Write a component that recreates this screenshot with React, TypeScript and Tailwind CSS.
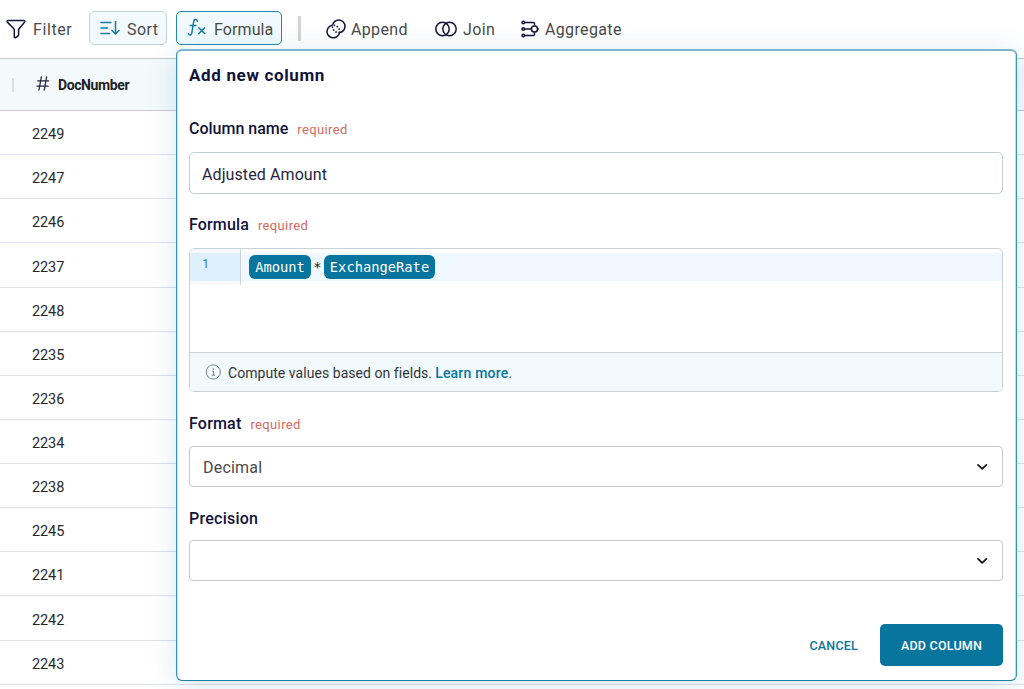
import React from "react";

const rows = ["2249", "2247", "2246", "2237", "2248", "2235", "2236", "2234", "2238", "2245", "2241", "2242", "2243"];

function FilterIcon() {
  return (
    <svg className="block shrink-0" width="20" height="20" viewBox="0 0 20 20" fill="none" stroke="#12123a" strokeWidth="1.5" strokeLinejoin="round">
      <path d="M2 1.500h16c.8 0 1.200 1 .7 1.600l-5.600 6.600c-.3.400-.5.800-.5 1.300v5c0 .4-.2.700-.5.900l-2.500 1.700c-.6.400-1.300 0-1.300-.7v-6.900c0-.500-.2-.900-.5-1.300L1.300 3.100C.8 2.500 1.200 1.500 2 1.500z" />
    </svg>
  );
}

function SortIcon() {
  return (
    <svg className="block shrink-0" width="20" height="16" viewBox="0 0 20 16" fill="none" stroke="#127ba3" strokeWidth="1.5" strokeLinecap="round" strokeLinejoin="round">
      <path d="M1 2.500h10M1 8h6.500M1 13.500h8.500M15.500 1.500v12.300M12 10.500l3.500 3.500 3.500-3.500" />
    </svg>
  );
}

function FormulaIcon() {
  return (
    <svg className="block shrink-0" width="20" height="20" viewBox="0 0 20 20" fill="none" stroke="#127ba3" strokeWidth="1.5" strokeLinecap="round" strokeLinejoin="round">
      <path d="M10.300 3.200c0-1.200-.9-1.800-1.900-1.600-1.100.2-1.700 1.300-1.900 3L4.900 14.500c-.3 1.700-.9 2.600-1.900 2.600-.9 0-1.500-.500-1.500-1.400M3.200 7.500h5.800" />
      <path d="M11.800 9.700l5.800 5.800M17.600 9.700l-5.800 5.800" />
    </svg>
  );
}

function HashIcon() {
  return (
    <svg className="block shrink-0" width="14" height="15" viewBox="0 0 14 15" fill="none" stroke="#25253f" strokeWidth="1.300" strokeLinecap="round">
      <path d="M5.300 1L3 14M10.600 1L8.300 14M1.700 4.800h11M1 10.200h11" />
    </svg>
  );
}

function AppendIcon() {
  return (
    <svg className="block shrink-0" width="20" height="20" viewBox="0 0 20 20" fill="none" stroke="#12123a" strokeWidth="1.500">
      <path d="M6.500 6.250A6.300 6.300 0 1 1 13.500 13.550" />
      <path d="M6.500 6.250A6.300 6.300 0 1 0 13.500 13.550" />
      <path d="M6.500 6.250A6.300 6.300 0 0 0 13.500 13.550M6.500 6.250A6.300 6.300 0 0 1 13.500 13.550" strokeDasharray="1.500 1.600" strokeDashoffset="-1.200" />
    </svg>
  );
}

function JoinIcon() {
  return (
    <svg className="block shrink-0" width="22" height="16" viewBox="0 0 22 16" fill="none" stroke="#12123a" strokeWidth="1.500">
      <circle cx="7.500" cy="8" r="6.700" />
      <circle cx="14.500" cy="8" r="6.700" />
    </svg>
  );
}

function AggregateIcon() {
  return (
    <svg className="block shrink-0" width="18" height="18" viewBox="0 0 18 18" fill="none" stroke="#12123a" strokeWidth="1.500">
      <circle cx="2.300" cy="2.500" r="1.300" />
      <circle cx="2.300" cy="9" r="1.300" />
      <circle cx="2.300" cy="15.500" r="1.300" />
      <circle cx="13.500" cy="9" r="3.100" />
      <path d="M3.700 2.500h8.500c.8 0 1.300.5 1.300 1.300v2M3.700 9h6.600M3.700 15.500h8.500c.8 0 1.300-.5 1.300-1.300v-2M16.600 9h1.200" />
    </svg>
  );
}

function Chevron() {
  return (
    <svg className="block shrink-0" width="12" height="8" viewBox="0 0 12 8" fill="none" stroke="#161616" strokeWidth="1.700" strokeLinecap="round" strokeLinejoin="round">
      <path d="M2 1.800l4.200 4 4.200-4" />
    </svg>
  );
}

function InfoIcon() {
  return (
    <svg className="block shrink-0" width="16" height="16" viewBox="0 0 16 16" fill="none" stroke="#72858e" strokeWidth="1">
      <circle cx="8.300" cy="8" r="7.100" />
      <path d="M7.200 7.200h1.300v3.800M6.800 11.200h3.200" />
      <circle cx="8.300" cy="5" r=".4" fill="#72858e" />
    </svg>
  );
}

function Label({ children, required }: { children: React.ReactNode; required?: boolean }) {
  return (
    <div className="flex h-5 items-baseline gap-[9px] leading-5">
      <span className="text-[16px] font-medium text-[#12123a]">{children}</span>
      {required && <span className="text-[13px] tracking-[0.35px] text-[#d4695f]">required</span>}
    </div>
  );
}

function Select({ value }: { value?: string }) {
  return (
    <div className="flex h-[41px] items-center justify-between rounded-[4px] border border-[#c9c9c9] bg-white pl-[13px] pr-[14px]">
      <span className="pt-[3px] text-[16px] tracking-[0.2px] text-[#4a4a4a]">{value}</span>
      <Chevron />
    </div>
  );
}

export default function App() {
  return (
    <div className="relative h-[689px] w-[1024px] overflow-hidden bg-white font-['Roboto',sans-serif]">
      <header className="flex h-[58px] items-start pl-[6px] pt-[11px] text-[16px] text-[#4a4a4a]">
        <div className="flex h-[35px] w-[83px] items-center gap-[7px]">
          <FilterIcon />
          <span className="pt-[2px] tracking-[0.6px]">Filter</span>
        </div>
        <div className="flex h-[34px] w-[78px] items-center gap-[7px] rounded-[5px] border border-[#c3d3d9] bg-[#f2fafd] pl-[10px]">
          <SortIcon />
          <span className="pt-[3px] tracking-[0.4px]">Sort</span>
        </div>
        <div className="ml-[9px] flex h-[34px] w-[106px] items-center gap-[7px] rounded-[5px] border border-[#2588ab] bg-[#f0fafe] pl-[10px]">
          <FormulaIcon />
          <span className="pt-[3px] tracking-[0.1px]">Formula</span>
        </div>
        <div className="ml-4 mt-[5px] h-[25px] w-[3px] bg-[#cfd4d8]" />
        <div className="ml-[25px] flex h-[35px] w-[109px] items-center gap-[5px]">
          <AppendIcon />
          <span className="pt-[2px] tracking-[0.35px]">Append</span>
        </div>
        <div className="flex h-[35px] w-[86px] items-center gap-[6px]">
          <JoinIcon />
          <span className="pt-[2px] tracking-[0.4px]">Join</span>
        </div>
        <div className="flex h-[35px] items-center gap-[6px]">
          <AggregateIcon />
          <span className="pt-[2px] tracking-[0.35px]">Aggregate</span>
        </div>
      </header>

      <div className="flex h-[53px] items-center border-y border-[#c5c9cb] bg-[#f4fafb] pl-[12px]">
        <div className="h-[14px] w-[2px] bg-[#d9dfe1]" />
        <div className="ml-[22px] pb-[3px]">
          <HashIcon />
        </div>
        <span className="ml-2 pt-[2px] text-[14px] font-bold tracking-[-0.4px] text-[#202124]">DocNumber</span>
      </div>
      <div>
        {rows.map((row) => (
          <div key={row} className="flex h-[44.130px] items-center border-b border-[#dfe2ec] pl-8 pt-[5px] text-[14.500px] tracking-[-0.1px] text-[#25282b]">
            {row}
          </div>
        ))}
      </div>

      <section className="absolute left-[176px] top-[49px] flex h-[632px] w-[841px] flex-col rounded-[6px] border-x border-b border-t-2 border-x-[#3a94b3] border-b-[#1880a5] border-t-[#7ab8cd] bg-white pl-[12px] pr-[13px] shadow-[inset_1px_0_0_#c3dfe9,inset_-1px_0_0_#c3dfe9,0_4px_28px_rgba(20,120,170,0.17)]">
        <h1 className="mt-[14px] h-5 text-[17px] font-bold leading-5 tracking-[0.650px] text-[#12123a]">Add new column</h1>

        <div className="mt-[34px]">
          <Label required>Column name</Label>
        </div>
        <div className="mt-[13px] flex h-[42px] items-center rounded-[5px] border border-[#c3cfd4] pl-3 pt-[4px] text-[16px] tracking-[0.1px] text-[#25253f]">
          Adjusted Amount
        </div>

        <div className="mt-[21px] tracking-[0.15px]">
          <Label required>Formula</Label>
        </div>
        <div className="mt-[13px] flex h-[144px] flex-col overflow-hidden rounded-[5px] border border-[#c8d1d5]">
          <div className="h-[103px]">
            <div className="flex h-[36px]">
              <div className="w-[51px] border-r border-[#ccd3d6] bg-[#f6f8f9] pt-1">
                <div className="h-7 bg-[#dff0fd] pl-3 pt-[2px] text-[13px] leading-[18px] text-[#3b83a2]">1</div>
              </div>
              <div className="flex-1 pt-1">
                <div className="flex h-7 items-center bg-[#eff8fe] pl-2 font-['DejaVu_Sans_Mono',monospace] text-[13.750px] text-[#222222]">
                  <span className="flex h-6 w-[62px] items-center justify-center rounded-[6px] bg-[#07759d] text-white">Amount</span>
                  <span className="w-[13px] text-center">*</span>
                  <span className="flex h-6 w-[111px] items-center justify-center rounded-[6px] bg-[#07759d] text-white">ExchangeRate</span>
                </div>
              </div>
            </div>
          </div>
          <div className="flex flex-1 items-center border-t border-[#c8d1d5] bg-[#f2fafd] pl-[15px] text-[14px] text-[#303438]">
            <InfoIcon />
            <span className="ml-[7px] pt-[2px] tracking-[0.050px]">Compute values based on fields.</span>
            <span className="ml-[3px] pt-[2px] font-medium tracking-[0.2px] text-[#07759d]">Learn more</span>
            <span className="pt-[2px]">.</span>
          </div>
        </div>

        <div className="mt-[22px] tracking-[0.2px]">
          <Label required>Format</Label>
        </div>
        <div className="mt-[12px]">
          <Select value="Decimal" />
        </div>

        <div className="mt-[22px] tracking-[0.25px]">
          <Label>Precision</Label>
        </div>
        <div className="mt-[11px]">
          <Select />
        </div>

        <div className="mt-[43px] flex items-center justify-end text-[12.500px] font-medium">
          <button className="mr-[22px] pt-[2px] tracking-[0.2px] text-[#07759d]">CANCEL</button>
          <button className="h-[42px] w-[123px] rounded-[5px] bg-[#07759d] pt-[2px] tracking-[0.2px] text-white">ADD COLUMN</button>
        </div>
      </section>
    </div>
  );
}
